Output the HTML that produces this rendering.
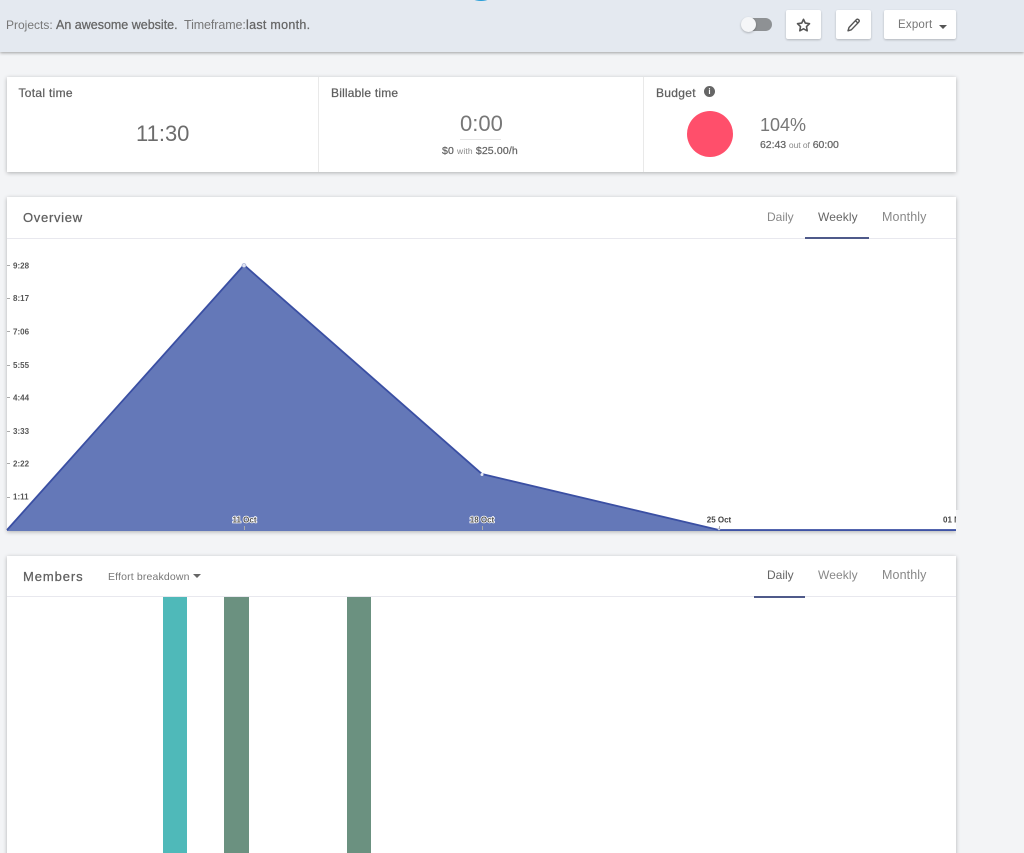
<!DOCTYPE html>
<html><head><meta charset="utf-8"><style>
html,body{margin:0;padding:0;width:1024px;height:853px;overflow:hidden}
body{background:#f3f4f6;position:relative;font-family:"Liberation Sans",sans-serif;color:#666}
.t{position:absolute;white-space:nowrap;line-height:1}
.s{-webkit-text-stroke:.25px currentColor}
.card{position:absolute;background:#fff;left:7px;width:949px;box-shadow:0 1px 4px rgba(0,0,0,.28)}
.btn{position:absolute;background:#fff;top:10px;height:29px;border-radius:2px;box-shadow:0 1px 2px rgba(0,0,0,.22)}
#wrap{position:absolute;left:0;top:0;width:1024px;height:853px;overflow:hidden;filter:blur(.3px)}
</style></head><body><div id="wrap">
<div style="position:absolute;left:0;top:0;width:1024px;height:52px;background:#e4e9f0;box-shadow:0 1px 3px rgba(0,0,0,.35)"></div>
<div style="position:absolute;left:469px;top:-12px;width:24px;height:13px;border-radius:50%;background:#2a9fd8"></div>
<span class="t" style="left:6px;top:19px;font-size:12px;color:#777">Projects:</span>
<span class="t s" style="left:56px;top:19px;font-size:12.500px;color:#666">An awesome website.</span>
<span class="t" style="left:184px;top:19px;font-size:12.500px;color:#777;letter-spacing:-.1px">Timeframe:</span>
<span class="t s" style="left:246px;top:19px;font-size:12.500px;color:#666;letter-spacing:.3px">last month.</span>

<div style="position:absolute;left:745px;top:18px;width:27px;height:13px;border-radius:7px;background:#8e9194"></div>
<div style="position:absolute;left:741px;top:17px;width:15px;height:15px;border-radius:50%;background:#f5f6f8;box-shadow:0 1px 2px rgba(0,0,0,.25)"></div>
<div class="btn" style="left:786px;width:35px"><svg width="35" height="29" style="position:absolute;left:0;top:0"><path d="M17.500 9.300l1.800 3.800 4.200.6-3 2.900.7 4.200-3.700-2-3.700 2 .7-4.200-3-2.900 4.200-.6z" fill="none" stroke="#555" stroke-width="1.600" stroke-linejoin="round"/></svg></div>
<div class="btn" style="left:836px;width:35px"><svg width="35" height="29" style="position:absolute;left:0;top:0"><path d="M13 17.500l7.300-7.800c.8-.8 1.700-.7 2.400 0 .7.700.7 1.600 0 2.400l-7.400 7.700-3.300 1z M19.500 10.700l2.500 2.400" fill="none" stroke="#555" stroke-width="1.400" stroke-linejoin="round"/></svg></div>
<div class="btn" style="left:884px;width:72px"><span class="t" style="left:14px;top:10px;font-size:11.500px;color:#777;letter-spacing:.2px">Export</span><div style="position:absolute;left:55px;top:15px;border:4px solid transparent;border-top-color:#555;border-bottom:0"></div></div>

<div class="card" style="top:77px;height:95px">
<div style="position:absolute;left:311px;top:0;width:1px;height:95px;background:#e9e9e9"></div>
<div style="position:absolute;left:636px;top:0;width:1px;height:95px;background:#e9e9e9"></div>
<span class="t s" style="left:11.500px;top:10px;font-size:12px;letter-spacing:.3px;color:#5f5f5f">Total time</span>
<span class="t" style="left:129px;top:46px;font-size:22px;color:#6c6c6c">11:30</span>
<span class="t s" style="left:324px;top:10px;font-size:12px;letter-spacing:.2px;color:#5f5f5f">Billable time</span>
<span class="t" style="left:453px;top:36px;font-size:22px;color:#777">0:00</span>
<div style="position:absolute;left:453px;top:62px;width:41px;height:1px;background:#e5e5e5"></div>
<span class="t s" style="left:435px;top:69px;font-size:10.500px;color:#666;letter-spacing:.15px">$0 <span style="font-size:8.500px;color:#888;-webkit-text-stroke:0">with</span> $25.00/h</span>
<span class="t s" style="left:649px;top:10px;font-size:12px;letter-spacing:.3px;color:#5f5f5f">Budget</span>
<div style="position:absolute;left:697px;top:9px;width:11px;height:11px;border-radius:50%;background:#666;color:#fff;font-size:8px;line-height:11px;text-align:center;font-weight:bold">i</div>
<div style="position:absolute;left:680px;top:34px;width:46px;height:46px;border-radius:50%;background:#ff4f6b"></div>
<span class="t" style="left:753px;top:39px;font-size:18px;color:#777">104%</span>
<span class="t s" style="left:753px;top:63px;font-size:10.500px;color:#666;letter-spacing:-.05px">62:43 <span style="font-size:8.500px;color:#888;-webkit-text-stroke:0">out of</span> 60:00</span>
</div>

<div class="card" style="top:197px;height:334px">
<span class="t s" style="left:16px;top:14px;font-size:13px;letter-spacing:.7px;color:#5f5f5f">Overview</span>
<div style="position:absolute;left:0;top:41px;width:949px;height:1px;background:#e8e8ee"></div>
<div style="position:absolute;left:798px;top:40px;width:64px;height:2px;background:#4f5a8a"></div>
<span class="t" style="left:760px;top:14px;font-size:12px;color:#888">Daily</span>
<span class="t" style="left:811px;top:14px;font-size:12px;letter-spacing:.1px;color:#666">Weekly</span>
<span class="t" style="left:875px;top:14px;font-size:12.500px;letter-spacing:.1px;color:#888">Monthly</span>
</div>

<svg width="1024" height="853" style="position:absolute;left:0;top:0">
<path d="M7 530L244 265L482 474L719 530L956 530V531H7Z" fill="#6478b8"/>
<path d="M7 530L244 265L482 474L719 530L956 530" fill="none" stroke="#3a4fa3" stroke-width="1.800"/>
<circle cx="244" cy="265.500" r="2" fill="#dfe3f2" stroke="#8d9ac9" stroke-width=".6"/>
<circle cx="482" cy="474.500" r="1.500" fill="#e8ebf5"/>
<circle cx="719" cy="529" r="1.300" fill="#c8cde4"/>
<g stroke="#aaa" stroke-width="1">
<path d="M7 265.500h3M7 298.500h3M7 331.500h3M7 365.500h3M7 397.500h3M7 431.500h3M7 463.500h3M7 497.500h3M244.500 526v4M482.500 526v4M719.500 526v3"/>
</g>
<g font-family="Liberation Sans,sans-serif" font-size="8" font-weight="bold" fill="#555">
<text x="13" y="268.500">9:28</text><text x="13" y="301">8:17</text><text x="13" y="334.500">7:06</text><text x="13" y="368">5:55</text><text x="13" y="400.500">4:44</text><text x="13" y="434">3:33</text><text x="13" y="466.500">2:22</text><text x="13" y="499.500">1:11</text>
</g>
<g font-family="Liberation Sans,sans-serif" font-size="8" font-weight="bold" text-anchor="middle">
<text x="244.500" y="522.500" fill="#555" stroke="#fff" stroke-width="1.500" paint-order="stroke">11 Oct</text>
<text x="482" y="522.500" fill="#555" stroke="#fff" stroke-width="1.500" paint-order="stroke">18 Oct</text>
<text x="719" y="522.500" fill="#444">25 Oct</text>
</g>
<text x="943" y="522.500" font-family="Liberation Sans,sans-serif" font-size="8" font-weight="bold" fill="#444">01 N</text>
<rect x="956" y="510" width="20" height="25" fill="#f3f4f6"/>
</svg>

<div class="card" style="top:556px;height:320px">
<span class="t s" style="left:16px;top:14px;font-size:13px;letter-spacing:.9px;color:#5f5f5f">Members</span>
<span class="t" style="left:101px;top:16px;font-size:10.500px;letter-spacing:.15px;color:#777">Effort breakdown</span>
<div style="position:absolute;left:186px;top:18px;border:4px solid transparent;border-top-color:#666;border-bottom:0"></div>
<div style="position:absolute;left:0;top:40px;width:949px;height:1px;background:#e8e8ee"></div>
<div style="position:absolute;left:747px;top:39.500px;width:51px;height:2px;background:#4f5a8a"></div>
<span class="t" style="left:760px;top:13px;font-size:12px;color:#666">Daily</span>
<span class="t" style="left:811px;top:13px;font-size:12px;letter-spacing:.1px;color:#888">Weekly</span>
<span class="t" style="left:875px;top:13px;font-size:12.500px;letter-spacing:.1px;color:#888">Monthly</span>
<div style="position:absolute;left:156px;top:41px;width:24px;height:280px;background:#4fb9b9"></div>
<div style="position:absolute;left:217px;top:41px;width:25px;height:280px;background:#6b9180"></div>
<div style="position:absolute;left:340px;top:41px;width:24px;height:280px;background:#6b9180"></div>
</div>
</div></body></html>
